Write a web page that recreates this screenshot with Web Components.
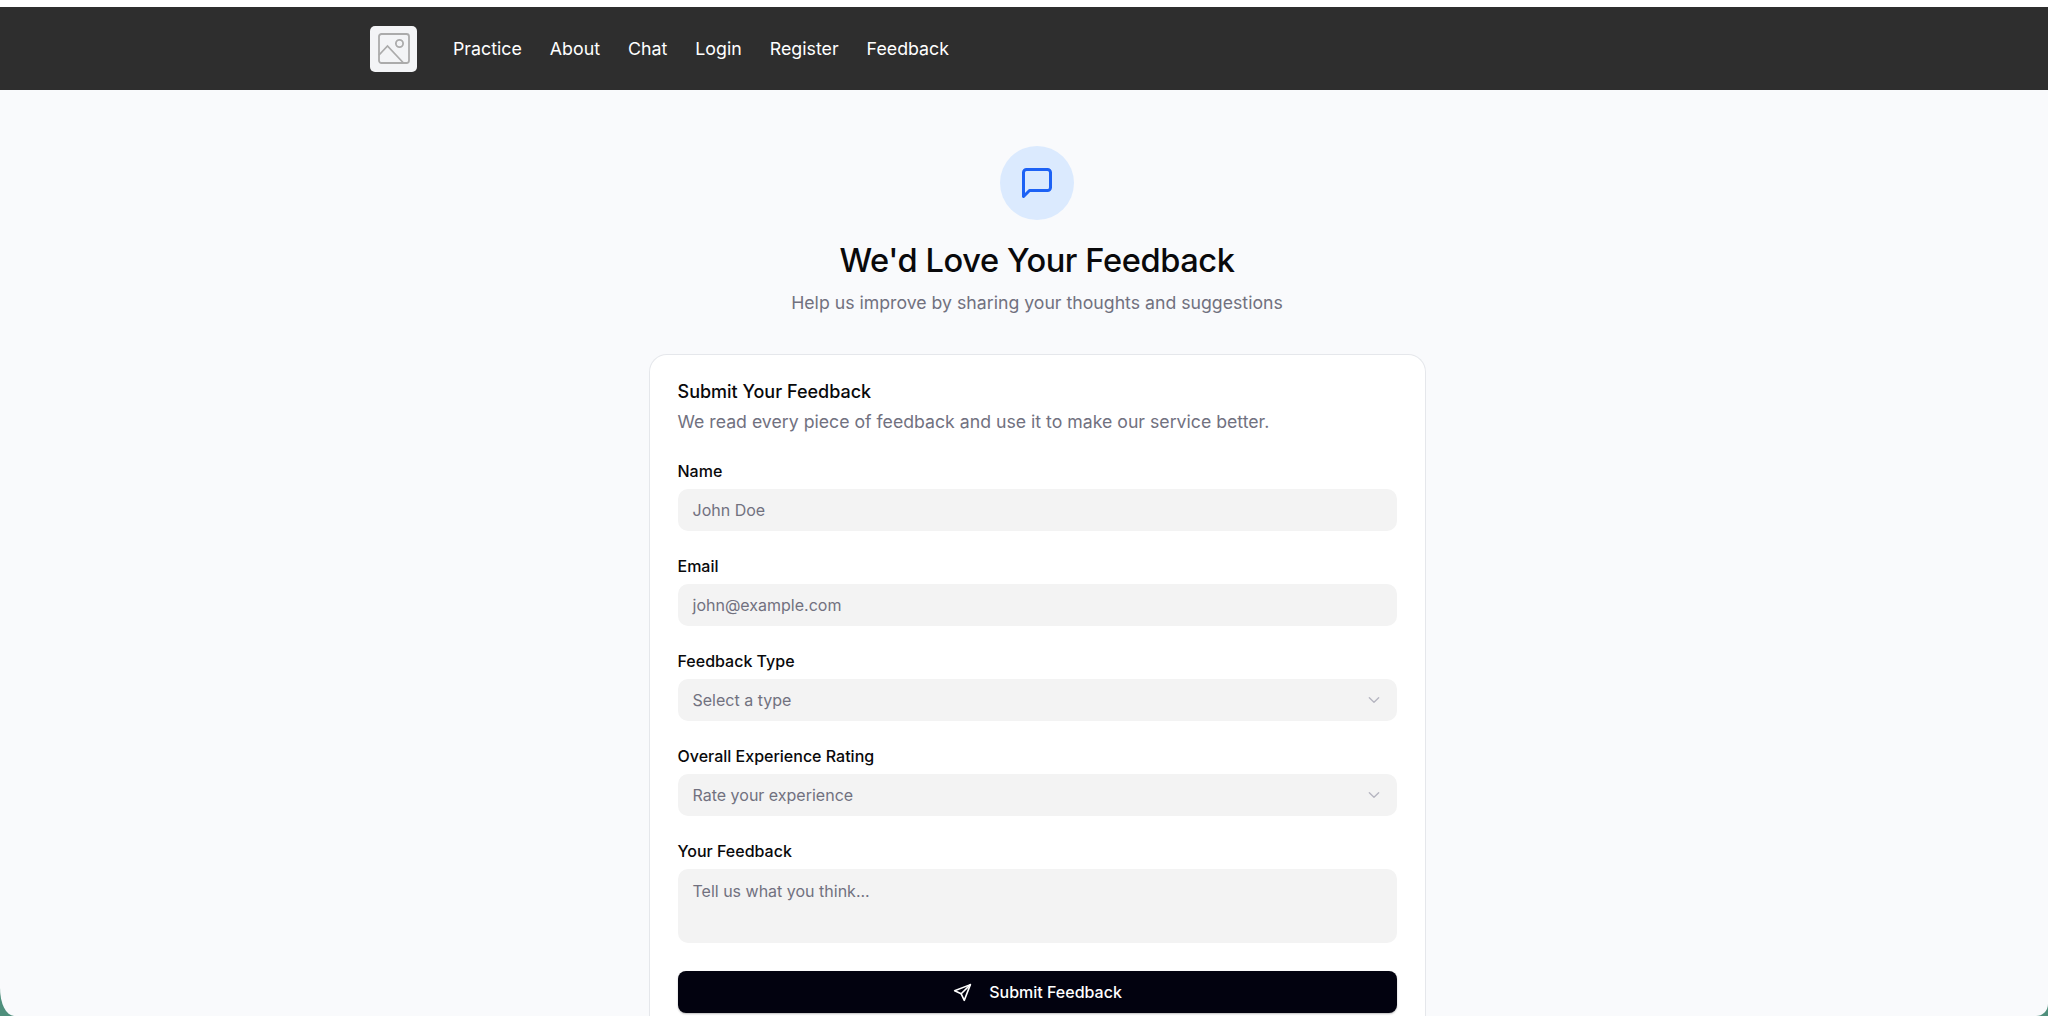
<!DOCTYPE html>
<html lang="en"><head><meta charset="utf-8"><title>Feedback</title>
<style>
html,body{margin:0;padding:0;height:1016px;overflow:hidden;background:#fff}
body{font-family:Inter,"Liberation Sans",sans-serif;}
.frame{height:1016px;box-sizing:border-box;padding-top:7px;background:linear-gradient(#fff 0 100px,#4f8f7c 100px);}
</style></head><body>
<div class="frame">
<app-shell>
  <site-nav></site-nav>
  <feedback-page></feedback-page>
</app-shell>
</div>
<script>
const def=(name,html)=>{customElements.define(name,class extends HTMLElement{
  constructor(){super();const s=this.attachShadow({mode:'open'});s.innerHTML=typeof html==='function'?html(this):html;}
});};
def('app-shell',`<style>:host{display:flex;flex-direction:column;height:1009px;background:#f9fafc;border-radius:0 0 12px 14px / 0 0 12px 28px;overflow:hidden}</style><slot></slot>`);
def('site-nav',`<style>
:host{display:flex;align-items:center;height:83px;flex:none;background:#2e2e2e;padding-left:370px;box-sizing:border-box;font:400 17.8px Inter,sans-serif;color:#fff}
.logo{width:47px;height:46px;background:#f3f4f6;border-radius:5px;display:flex;align-items:center;justify-content:center;margin-right:9px}
nav{display:flex;gap:28px;margin-left:27px}
a{color:#fff;text-decoration:none}
</style>
<div class="logo"><svg width="32" height="32" viewBox="0 0 32 32" fill="none" stroke="#ababab" stroke-width="1.8"><rect x="1" y="1" width="30" height="29" rx="2.5"/><circle cx="21.5" cy="10.5" r="3.6"/><path d="M1 22 L9.5 13 L25.5 30"/></svg></div>
<nav><a>Practice</a><a>About</a><a>Chat</a><a>Login</a><a>Register</a><a>Feedback</a></nav>`);
def('feedback-page',`<style>
:host{display:flex;flex-direction:column;align-items:center;padding:56px 0 0 26px;color:#09090b}
.circle{width:74px;height:74px;border-radius:50%;background:#dbeafe;display:flex;align-items:center;justify-content:center}
h1{font:550 32.6px/40px Inter,sans-serif;margin:20px 0 0;letter-spacing:-.4px}
p{font:400 17.7px/26px Inter,sans-serif;color:#71717f;margin:10px 0 0}
</style>
<div class="circle"><svg width="36" height="36" viewBox="0 0 24 24" fill="none" stroke="#1d62f5" stroke-width="2" stroke-linecap="round" stroke-linejoin="round"><path d="M21 15a2 2 0 0 1-2 2H7l-4 4V5a2 2 0 0 1 2-2h14a2 2 0 0 1 2 2z"/></svg></div>
<h1>We'd Love Your Feedback</h1>
<p>Help us improve by sharing your thoughts and suggestions</p>
<feedback-card></feedback-card>`);
def('feedback-card',`<style>
:host{display:flex;flex-direction:column;width:777px;box-sizing:border-box;margin-top:38px;padding:25px 28px 0;background:#fff;border:1px solid #e5e7eb;border-bottom:0;border-radius:18px 18px 0 0;height:700px}
h2{font:500 18px/24px Inter,sans-serif;margin:0;color:#09090b}
.d{font:400 17.7px/26px Inter,sans-serif;color:#71717f;margin:5px 0 25px}
button{all:unset;box-sizing:border-box;display:flex;align-items:center;justify-content:center;gap:16px;height:42px;border-radius:8px;background:#02020f;color:#fff;font:500 16px Inter,sans-serif;margin-top:28px;box-shadow:0 1px 2px #0004}
</style>
<h2>Submit Your Feedback</h2>
<div class="d">We read every piece of feedback and use it to make our service better.</div>
<form-field label="Name" kind="input" hint="John Doe"></form-field>
<form-field label="Email" kind="input" hint="john@example.com"></form-field>
<form-field label="Feedback Type" kind="select" hint="Select a type"></form-field>
<form-field label="Overall Experience Rating" kind="select" hint="Rate your experience"></form-field>
<form-field label="Your Feedback" kind="area" hint="Tell us what you think..."></form-field>
<button><svg width="21" height="21" viewBox="0 0 24 24" fill="none" stroke="#fff" stroke-width="1.8" stroke-linecap="round" stroke-linejoin="round"><path d="M21 3 3 10l7.5 3.5L14 21z"/><path d="M21 3 10.5 13.5"/></svg>Submit Feedback</button>`);
def('form-field',el=>{
 const k=el.getAttribute('kind'),hint=el.getAttribute('hint');
 const chev=k==='select'?`<svg width="16" height="16" viewBox="0 0 24 24" fill="none" stroke="#b5b5c0" stroke-width="2" stroke-linecap="round" stroke-linejoin="round"><path d="m5 8.5 7 7 7-7"/></svg>`:'';
 return `<style>
:host{display:block;margin-bottom:24px}
:host([kind=area]){margin-bottom:0}
label{display:block;font:500 16px/22px Inter,sans-serif;color:#09090b;margin-bottom:7px}
.box{display:flex;justify-content:space-between;align-items:center;height:42px;box-sizing:border-box;padding:0 15px;background:#f3f3f3;border-radius:10px;font:400 16px Inter,sans-serif;color:#71717f}
:host([kind=area]) .box{height:74px;align-items:flex-start;padding-top:12px}
</style><label>${el.getAttribute('label')}</label><div class="box"><span>${hint}</span>${chev}</div>`;
});
</script>
</body></html>
